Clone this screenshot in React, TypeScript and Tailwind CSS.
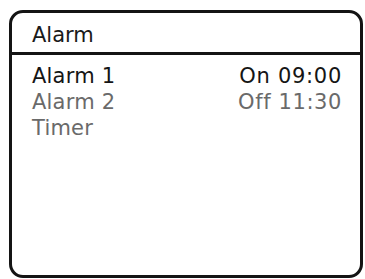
export default function App() {
  return (
    <div className="w-[365px] h-[279px] bg-white pt-[10px] pl-[9px]" style={{ fontFamily: '"DejaVu Sans", Verdana, sans-serif' }}>
      <div className="w-[354px] h-[268px] border-[3px] border-[#141414] rounded-[14px] flex flex-col overflow-hidden">
        <div className="pl-[20px] pt-[9px] pb-[4px] text-[21px] leading-[26px] text-[#1a1a1a] border-b-[3px] border-[#141414]">
          Alarm
        </div>
        <div className="pl-[20px] pr-[18px] pt-[8px] text-[21px] leading-[26px] flex flex-col">
          <div className="flex justify-between text-[#151515]">
            <span className="tracking-[0.2px]">Alarm 1</span>
            <span className="tracking-[0.7px]">On 09:00</span>
          </div>
          <div className="flex justify-between text-[#6a6a6a]">
            <span className="tracking-[0.2px]">Alarm 2</span>
            <span className="tracking-[0.6px]">Off 11:30</span>
          </div>
          <div className="flex justify-between text-[#6a6a6a]">
            <span className="tracking-[0.2px]">Timer</span>
          </div>
        </div>
      </div>
    </div>
  );
}
